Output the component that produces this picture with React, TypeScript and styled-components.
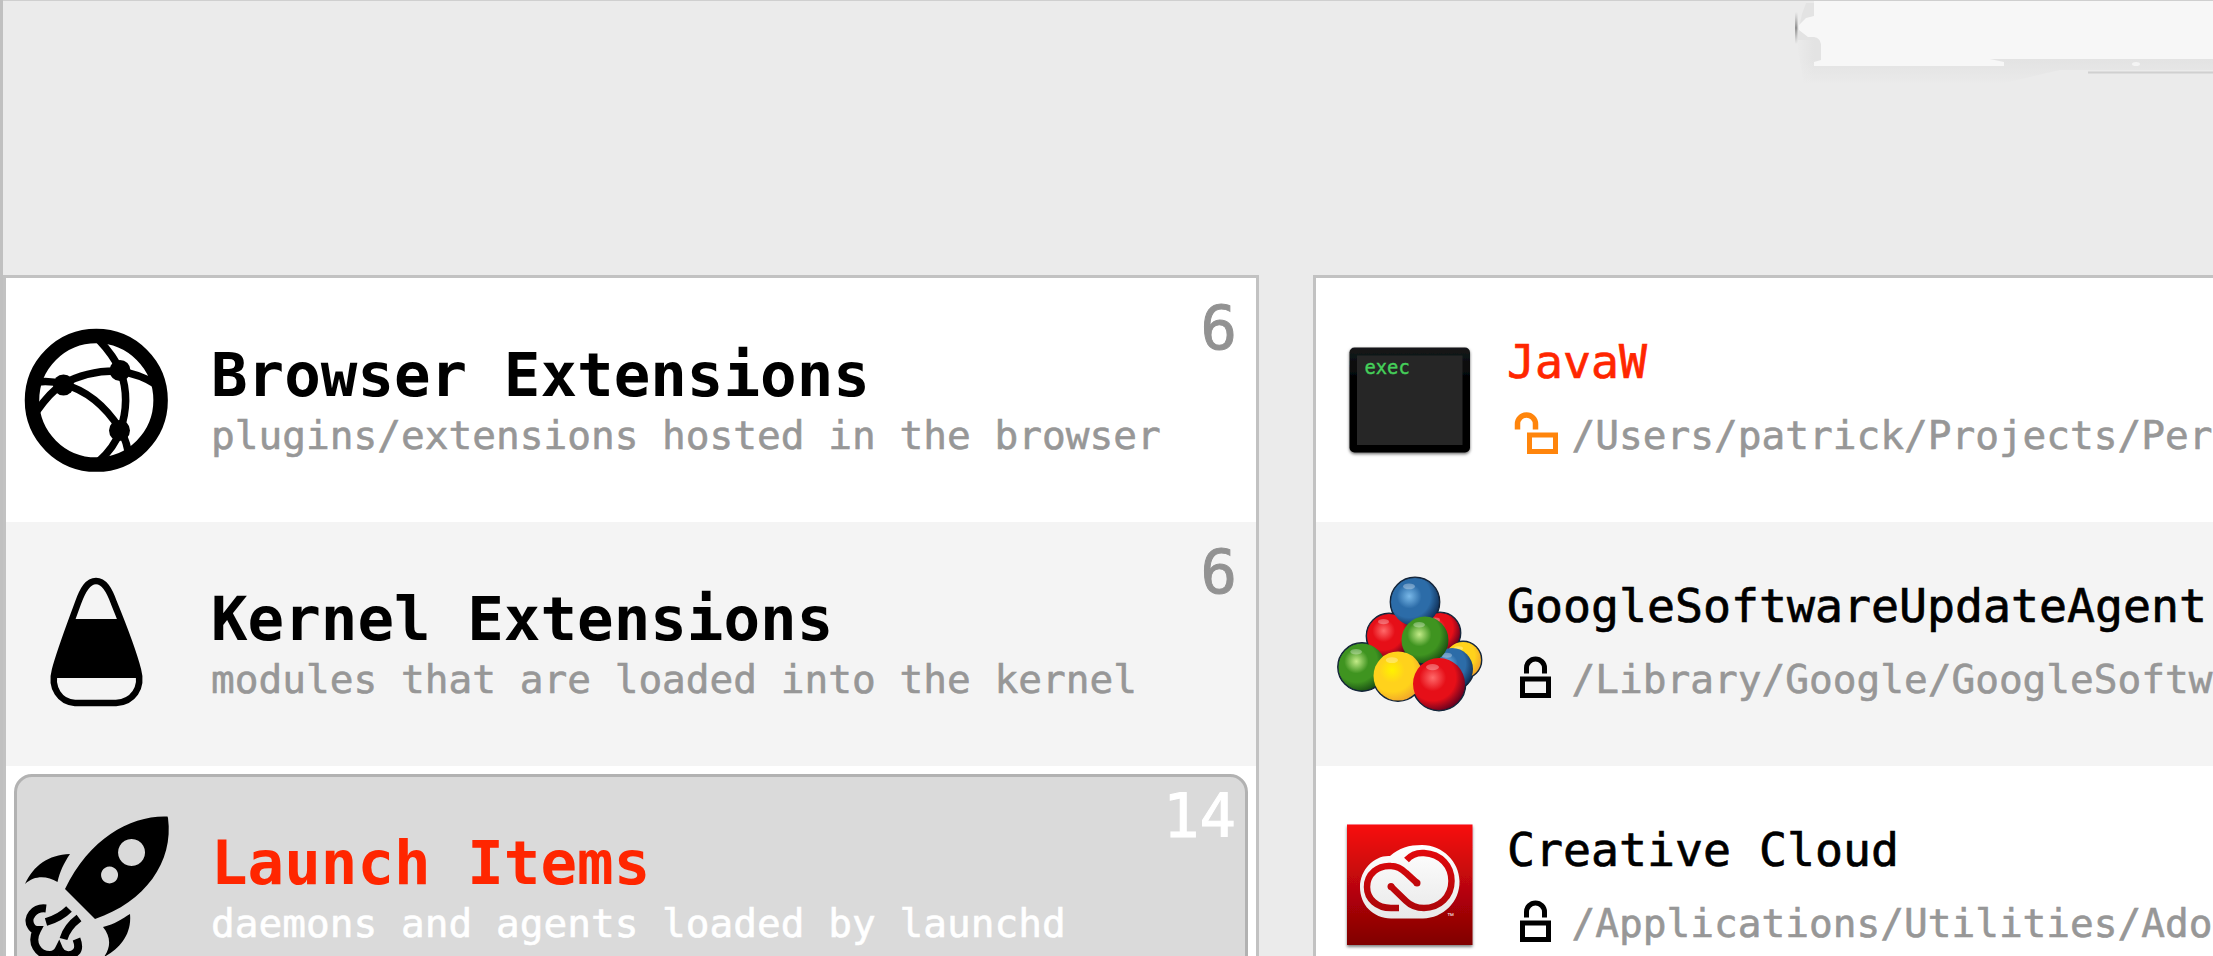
import React from "react";
import styled, { createGlobalStyle } from "styled-components";

const GlobalStyle = createGlobalStyle`
  html, body { margin: 0; height: 100%; overflow: hidden; background: #ebebeb; }
  * { box-sizing: border-box; }
`;

const Window = styled.main`
  position: relative;
  width: 2213px;
  height: 956px;
  overflow: hidden;
  display: flex;
  flex-direction: column;
  background: #ebebeb;
  border-left: 3px solid #c0c0c0;
  font-family: "DejaVu Sans Mono", Menlo, monospace;
`;

const Toolbar = styled.header`
  flex: none;
  height: 275px;
  border-top: 1px solid #cfcfcf;
`;

const ToolbarRemnant = styled.svg`
  position: absolute;
  top: 0;
  right: 0;
`;

const Panels = styled.div`
  flex: 1;
  display: flex;
  gap: 54px;
  min-height: 0;
`;

const Panel = styled.section<{ $width: number }>`
  flex: none;
  width: ${(p) => p.$width}px;
  height: 760px;
  border: 3px solid #c2c2c2;
  background: #fff;
`;

const Row = styled.div<{ $shaded?: boolean }>`
  position: relative;
  display: flex;
  height: 244px;
  background: ${(p) => (p.$shaded ? "#f4f4f4" : "#fff")};
`;

const CategoryRow = styled(Row)<{ $selected?: boolean }>`
  ${(p) =>
    p.$selected &&
    `
    margin: 8px 8px 0;
    height: 236px;
    background: #dadada;
    border: 3px solid #b2b2b2;
    border-radius: 18px;
  `}
`;

const IconCell = styled.div<{ $width: number; $selected?: boolean }>`
  flex: none;
  width: ${(p) => p.$width - (p.$selected ? 11 : 0)}px;
  margin-top: ${(p) => (p.$selected ? -11 : 0)}px;
  svg { display: block; margin-left: ${(p) => (p.$selected ? -11 : 0)}px; }
`;

const CategoryText = styled.div<{ $selected?: boolean }>`
  flex: 1;
  padding-top: ${(p) => (p.$selected ? 51 : 62)}px;
  white-space: nowrap;
`;

const CategoryTitle = styled.h2<{ $alert?: boolean }>`
  margin: 0;
  font-size: 60.800px;
  line-height: 70px;
  font-weight: 700;
  color: ${(p) => (p.$alert ? "#ff2600" : "#000")};
`;

const CategoryNote = styled.p<{ $selected?: boolean }>`
  margin: 0;
  font-size: 39.450px;
  line-height: 50px;
  -webkit-text-stroke: 0.6px currentColor;
  color: ${(p) => (p.$selected ? "#fff" : "#979797")};
`;

const Count = styled.span<{ $selected?: boolean }>`
  position: absolute;
  top: ${(p) => (p.$selected ? 4 : 15)}px;
  right: ${(p) => (p.$selected ? 9 : 19)}px;
  font-size: 60.6px;
  line-height: 70px;
  -webkit-text-stroke: 1px currentColor;
  color: ${(p) => (p.$selected ? "#fff" : "#929292")};
`;

const ItemText = styled.div`
  padding-top: 56px;
  white-space: nowrap;
`;

const ItemName = styled.h3<{ $alert?: boolean }>`
  margin: 0;
  font-size: 46.5px;
  line-height: 56px;
  font-weight: 400;
  -webkit-text-stroke: 0.7px currentColor;
  color: ${(p) => (p.$alert ? "#ff2600" : "#000")};
`;

const ItemPath = styled.div`
  display: flex;
  align-items: flex-start;
  margin-top: 20px;
  font-size: 39.450px;
  line-height: 50px;
  -webkit-text-stroke: 0.6px currentColor;
  color: #979797;
  svg { flex: none; margin-top: -3px; }
`;

const NetworkIcon = () => (
  <svg width="200" height="244" viewBox="0 0 200 244" fill="none" stroke="#000">
    <circle cx="90.3" cy="122.3" r="64.3" strokeWidth="14.500" />
    <g strokeWidth="7.500">
      <path d="M92 61 Q108 78 114.500 93 Q125 122 114 153 Q108 170 93 183" />
      <path d="M32 104 Q44 102.500 57 106 Q91 115 114 151 Q122 165 123 181" />
      <path d="M31 133 Q44 114 57 106 Q82 92 113 93 Q134 96 151 107" />
    </g>
    <g fill="#000" stroke="none">
      <circle cx="57.500" cy="107" r="10.500" />
      <circle cx="114" cy="92.500" r="10.500" />
      <circle cx="113.500" cy="152.500" r="10.500" />
    </g>
  </svg>
);

const cornOutline =
  "M90 59 C82 59 77 67 72 81 C64 103 54 129 49 148 C44 166 54 180 69 181 H110 C127 180 137 166 132 148 C127 129 117 103 108 81 C103 67 98 59 90 59 Z";

const CandyCornIcon = () => (
  <svg width="200" height="244" viewBox="0 0 200 244" fill="none" stroke="#000">
    <clipPath id="cornBody">
      <path d={cornOutline} />
    </clipPath>
    <path strokeWidth="6.500" d={cornOutline} />
    <rect x="40" y="97" width="100" height="59" fill="#000" stroke="none" clipPath="url(#cornBody)" />
  </svg>
);

const RocketIcon = () => (
  <svg width="200" height="244" viewBox="0 0 200 244">
    <path
      fillRule="evenodd"
      d="M161.500 50.500 C126 49 84 71 59 123 L89 153 C139 136 168 96 162 52 Z M125.500 73 a13.500 13.500 0 1 0 .1 0 Z M103.500 100.500 a8.500 8.500 0 1 0 .1 0 Z"
    />
    <path d="M64 88 C42 89 28 99 19 118 C29 109 41 110 51.500 116 C54 105 58 97 64 88 Z" />
    <path d="M124 148 C116 153 109 158 97 161 C105 171 105 181 98 191 C113 183 126 169 124 148 Z" />
    <g fill="none" stroke="#000" strokeWidth="8">
      <path d="M63 143 Q54 152 40 156" />
      <path d="M73 152 Q61 161 57.500 173" />
      <path d="M40 142.500 C28 141 20 152 25 160 Q27 164 31 164 C24 177 32 189 44 189 Q50 189 53 183 C56 190 65 191 70 186 Q74 182 70.500 173" />
    </g>
  </svg>
);

const ExecIcon = () => (
  <svg width="186" height="244" viewBox="0 0 186 244">
    <defs>
      <linearGradient id="execFrame" x1="0" y1="0" x2="0" y2="1">
        <stop offset="0" stopColor="#15191b" />
        <stop offset="0.35" stopColor="#000" />
      </linearGradient>
      <filter id="execShadow" x="-10%" y="-10%" width="120%" height="125%">
        <feDropShadow dx="0" dy="1.500" stdDeviation="1.800" floodOpacity="0.6" />
      </filter>
    </defs>
    <rect x="33.500" y="69.500" width="120.500" height="105" rx="5" fill="url(#execFrame)" filter="url(#execShadow)" />
    <rect x="41" y="77.500" width="105.500" height="89.500" fill="#262626" />
    <text x="48.500" y="96" fontSize="18.800" fill="#45d05a" stroke="#45d05a" strokeWidth="0.400" fontFamily="DejaVu Sans Mono, monospace">exec</text>
  </svg>
);

type Ball = { x: number; y: number; r: number; tone: "blue" | "red" | "green" | "yellow" };

const balls: Ball[] = [
  { x: 124, y: 74, r: 20, tone: "red" },
  { x: 147, y: 101, r: 18, tone: "yellow" },
  { x: 136, y: 110, r: 21, tone: "blue" },
  { x: 73, y: 77, r: 22, tone: "red" },
  { x: 99, y: 43, r: 24, tone: "blue" },
  { x: 46, y: 108, r: 23.5, tone: "green" },
  { x: 109, y: 81, r: 23.5, tone: "green" },
  { x: 82, y: 117, r: 24.5, tone: "yellow" },
  { x: 123, y: 125, r: 26, tone: "red" },
];

const ballTones = {
  blue: ["#79b8e8", "#2c6ca8", "#0e2c52"],
  red: ["#ff6a6a", "#e60f18", "#5c0020"],
  green: ["#c3eb88", "#3f9420", "#174a12"],
  yellow: ["#fff200", "#ffd21c", "#f0a22c"],
};

const BallsIcon = () => (
  <svg width="186" height="244" viewBox="0 -37 186 244">
    <defs>
      {Object.entries(ballTones).map(([name, [light, mid, dark]]) => (
        <radialGradient key={name} id={`ball-${name}`} cx="0.38" cy="0.38" r="0.68">
          <stop offset="0" stopColor={light} />
          <stop offset="0.38" stopColor={mid} />
          <stop offset="0.65" stopColor={mid} />
          <stop offset="1" stopColor={dark} />
        </radialGradient>
      ))}
    </defs>
    {balls.map((b, i) => (
      <circle key={`rim-${i}`} cx={b.x} cy={b.y} r={b.r + 0.8} fill="#122338" stroke="#122338" strokeWidth={1.2} />
    ))}
    {balls.map((b, i) => (
      <g key={i}>
        <circle cx={b.x} cy={b.y} r={b.r} fill={`url(#ball-${b.tone})`} />
        <ellipse cx={b.x - b.r * 0.25} cy={b.y - b.r * 0.65} rx={b.r * 0.25} ry={b.r * 0.12} fill="#fff" opacity="0.3" />
      </g>
    ))}
  </svg>
);

const CreativeCloudIcon = () => (
  <svg width="186" height="244" viewBox="0 0 186 244">
    <defs>
      <linearGradient id="ccTile" x1="0" y1="0" x2="0" y2="1">
        <stop offset="0" stopColor="#f80c0f" />
        <stop offset="1" stopColor="#800003" />
      </linearGradient>
      <linearGradient id="ccCloud" x1="0" y1="0" x2="0" y2="1">
        <stop offset="0" stopColor="#fff" />
        <stop offset="1" stopColor="#e8e8e8" />
      </linearGradient>
      <linearGradient id="ccLine" gradientUnits="userSpaceOnUse" x1="0" y1="84" x2="0" y2="146">
        <stop offset="0" stopColor="#e2090d" />
        <stop offset="1" stopColor="#ab0509" />
      </linearGradient>
      <filter id="ccShadow" x="-10%" y="-10%" width="120%" height="125%">
        <feDropShadow dx="0" dy="2" stdDeviation="1.600" floodOpacity="0.5" />
      </filter>
    </defs>
    <rect x="31" y="58.500" width="125.500" height="120.500" fill="url(#ccTile)" filter="url(#ccShadow)" />
    <path
      d="M74 90 C83 82 93 79 106 79 C127 79 143 96 143.500 115 C144 136 127 152 107 152.500 H75 C57 152 44 139 44 121 C44 103 59 89 74 90 Z"
      fill="url(#ccCloud)"
    />
    <path
      d="M90.500 94 C95 89 101 86.500 108 87 C125 88 135.500 100 135.500 115 C135.500 131 123 142 108 142 C100 142 95 140 90 135 L75 120.500"
      fill="none" stroke="url(#ccLine)" strokeWidth="6.500" strokeLinejoin="round"
    />
    <circle cx="75" cy="120.500" r="3.500" fill="#c1070b" />
    <path
      d="M83 142 L75 142 C61 142 51 133 51 121 C51 108 62 99 75 100 C81 100 86 103 90 107 L101 117"
      fill="none" stroke="url(#ccLine)" strokeWidth="6.500"
    />
    <circle cx="101" cy="117" r="3.500" fill="#c1070b" />
    <text x="131" y="152" fontSize="7" fill="#fff" fontFamily="Liberation Sans, sans-serif">™</text>
  </svg>
);

const OpenLock = () => (
  <svg width="64.500" height="54" viewBox="0 0 64.5 54" fill="none" stroke="#ff850c">
    <path d="M10.500 22.500 V17 A9 9 0 0 1 28.500 17 V22.500" strokeWidth="5.500" />
    <rect x="22.500" y="28" width="26" height="16.500" strokeWidth="5" />
  </svg>
);

const ClosedLock = () => (
  <svg width="64.500" height="54" viewBox="0 0 64.5 54" fill="none" stroke="#000">
    <path d="M19.500 22.500 V17 A9 9 0 0 1 37.500 17 V22.500" strokeWidth="5" />
    <rect x="15.500" y="28" width="26" height="16.500" strokeWidth="5" />
  </svg>
);

const categories = [
  { title: "Browser Extensions", note: "plugins/extensions hosted in the browser", count: 6, Icon: NetworkIcon },
  { title: "Kernel Extensions", note: "modules that are loaded into the kernel", count: 6, Icon: CandyCornIcon },
  { title: "Launch Items", note: "daemons and agents loaded by launchd", count: 14, Icon: RocketIcon, selected: true },
];

const items = [
  { name: "JavaW", path: "/Users/patrick/Projects/Per", Icon: ExecIcon, alert: true },
  { name: "GoogleSoftwareUpdateAgent", path: "/Library/Google/GoogleSoftw", Icon: BallsIcon },
  { name: "Creative Cloud", path: "/Applications/Utilities/Ado", Icon: CreativeCloudIcon },
];

export default function App() {
  return (
    <>
      <GlobalStyle />
      <Window>
        <Toolbar>
          <ToolbarRemnant width="453" height="110" viewBox="0 0 453 110">
            <defs>
              <linearGradient id="remnantShade" x1="0" y1="0" x2="0" y2="1">
                <stop offset="0.7" stopColor="#e3e3e3" />
                <stop offset="0.95" stopColor="#e9e9e9" />
                <stop offset="1" stopColor="#ebebeb" />
              </linearGradient>
              <linearGradient id="remnantSide" x1="0" y1="0" x2="1" y2="0">
                <stop offset="0" stopColor="#ebebeb" />
                <stop offset="1" stopColor="#ebebeb" stopOpacity="0" />
              </linearGradient>
              <linearGradient id="remnantEdge" x1="0" y1="0" x2="0" y2="1">
                <stop offset="0" stopColor="#a0a0a0" stopOpacity="0" />
                <stop offset="0.5" stopColor="#909090" />
                <stop offset="1" stopColor="#a0a0a0" stopOpacity="0" />
              </linearGradient>
            </defs>
            <path d="M46 3 H453 V70 H300 L240 84 H44 L38 50 V32 L42 14 Z" fill="url(#remnantShade)" />
            <rect x="36" y="40" width="18" height="46" fill="url(#remnantSide)" />
            <path d="M54 1 H453 V59 H230 L244 62 V66 H54 V62 L61 60 V44 Q60 38 54 37 H48 L39 30 V25 L46 18 L54 16 Z" fill="#f7f7f7" />
            <rect x="35" y="12" width="2.500" height="32" fill="url(#remnantEdge)" />
            <path d="M328 72.500 H453" stroke="#d0d0d0" strokeWidth="2" />
            <ellipse cx="376" cy="64" rx="4" ry="2" fill="#f4f4f4" />
          </ToolbarRemnant>
        </Toolbar>
        <Panels>
          <Panel $width={1256}>
            {categories.map(({ title, note, count, Icon, selected }, i) => (
              <CategoryRow key={title} $shaded={i % 2 === 1} $selected={selected}>
                <IconCell $width={205} $selected={selected}><Icon /></IconCell>
                <CategoryText $selected={selected}>
                  <CategoryTitle $alert={selected}>{title}</CategoryTitle>
                  <CategoryNote $selected={selected}>{note}</CategoryNote>
                </CategoryText>
                <Count $selected={selected}>{count}</Count>
              </CategoryRow>
            ))}
          </Panel>
          <Panel $width={960}>
            {items.map(({ name, path, Icon, alert }, i) => (
              <Row key={name} $shaded={i % 2 === 1}>
                <IconCell $width={191}><Icon /></IconCell>
                <ItemText>
                  <ItemName $alert={alert}>{name}</ItemName>
                  <ItemPath>
                    {alert ? <OpenLock /> : <ClosedLock />}
                    {path}
                  </ItemPath>
                </ItemText>
              </Row>
            ))}
          </Panel>
        </Panels>
      </Window>
    </>
  );
}
